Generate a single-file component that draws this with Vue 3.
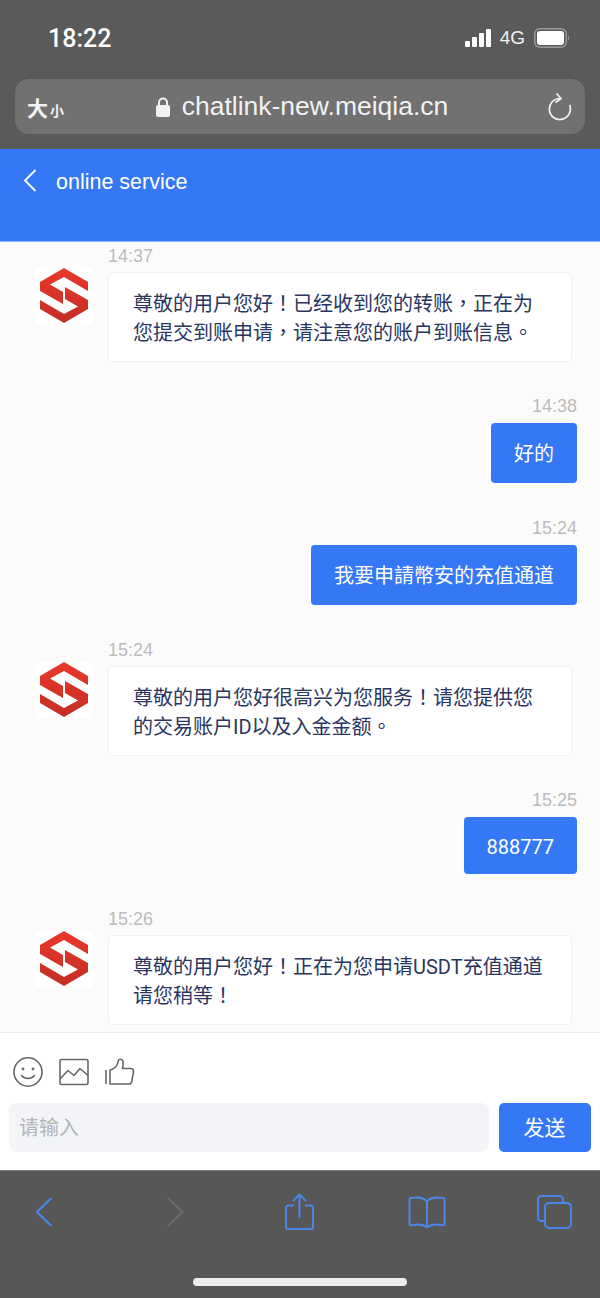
<template>
  <div class="phone">
    <header class="browser-top">
      <div class="status-bar">
        <span class="clock">18:22</span>
        <div class="status-right">
          <svg class="signal" width="27" height="18" viewBox="0 0 27 18" aria-hidden="true">
            <rect x="0" y="12" width="5" height="6" rx="1" />
            <rect x="7" y="8" width="5" height="10" rx="1" />
            <rect x="14" y="4" width="5" height="14" rx="1" />
            <rect x="21" y="0" width="5" height="18" rx="1" />
          </svg>
          <span class="network">4G</span>
          <svg class="battery" width="36" height="20" viewBox="0 0 36 20" aria-hidden="true">
            <rect x="0.75" y="0.75" width="31.5" height="18.5" rx="5" fill="none" stroke="#999" stroke-width="1.5" />
            <rect x="3" y="3" width="27" height="14" rx="3" fill="#fff" />
            <path d="M34 7 Q36 10 34 13 Z" fill="#999" />
          </svg>
        </div>
      </div>
      <div class="url-bar">
        <span class="text-size">大<small>小</small></span>
        <div class="url">
          <svg width="14" height="20" viewBox="0 0 14 20" aria-hidden="true">
            <path d="M3 9V5.500a4 4 0 0 1 8 0V9" fill="none" stroke="#f2f2f2" stroke-width="2" />
            <rect x="0" y="8" width="14" height="12" rx="2" fill="#f2f2f2" />
          </svg>
          <span>chatlink-new.meiqia.cn</span>
        </div>
        <svg class="reload" width="26" height="30" viewBox="0 0 26 30" fill="none" stroke="#f2f2f2" stroke-width="1.700" aria-hidden="true">
          <path d="M14 6.500a10.500 10.500 0 1 0 9.600 6.500" />
          <path d="M10.500 1.500 15 6.500l-5.500 4" />
        </svg>
      </div>
    </header>

    <div class="page-head">
      <svg width="14" height="23" viewBox="0 0 14 23" fill="none" stroke="#fff" stroke-width="1.800" aria-hidden="true">
        <path d="M12.500 1 2 11.500 12.500 22" />
      </svg>
      <span>online service</span>
    </div>

    <main class="chat">
      <div
        v-for="msg in messages"
        :key="msg.time + msg.from"
        class="msg"
        :class="msg.from === 'me' ? 'msg-me' : 'msg-agent'"
        :style="{ marginTop: msg.gap + 'px' }"
      >
        <div v-if="msg.from === 'agent'" class="avatar">
          <svg width="48" height="55" viewBox="0 0 48 55" aria-hidden="true">
            <defs>
              <linearGradient id="logoRed" gradientUnits="userSpaceOnUse" x1="0" y1="0" x2="0" y2="55">
                <stop offset="0" stop-color="#ea372b" />
                <stop offset="1" stop-color="#c42e25" />
              </linearGradient>
            </defs>
            <path fill="url(#logoRed)" d="M24 0 48 14V23L24 9 10 16.500 23 24V36L0 23V14Z" />
            <path fill="url(#logoRed)" d="M25 19 48 32V41L24 55 0 41V32L24 46 38 38.500 25 31Z" />
          </svg>
        </div>
        <div class="msg-body">
          <div class="msg-time">{{ msg.time }}</div>
          <div class="bubble" :style="{ height: msg.height + 'px' }">
            <p v-for="line in msg.lines" :key="line">
              <span
                v-for="(part, i) in splitPunct(line)"
                :key="i"
                :class="{ punct: part.punct }"
              >{{ part.text }}</span>
            </p>
          </div>
        </div>
      </div>
    </main>

    <footer class="composer">
      <div class="tools">
        <svg width="30" height="30" viewBox="0 0 30 30" fill="none" stroke="#666" stroke-width="1.600" aria-hidden="true">
          <ellipse cx="15" cy="15" rx="14" ry="14.200" />
          <circle cx="10" cy="12" r="1.400" fill="#666" stroke="none" />
          <circle cx="20" cy="12" r="1.400" fill="#666" stroke="none" />
          <path d="M8.500 18.500c3.500 4 9.500 4 13 0" stroke-linecap="round" />
        </svg>
        <svg width="30" height="28" viewBox="0 0 30 28" fill="none" stroke="#666" stroke-width="1.600" aria-hidden="true">
          <rect x="1" y="1.500" width="28" height="25" rx="1.500" />
          <path d="M1 21 9 12.500l6 5 6-7 8 7" stroke-linejoin="round" />
        </svg>
        <svg width="30" height="28" viewBox="0 0 30 28" fill="none" stroke="#666" stroke-width="1.600" aria-hidden="true">
          <path d="M1 12v14" />
          <path d="M5 12v14h19c1.500 0 2.500-1 2.800-2.500l1.700-10c.2-1.800-1-3-2.700-3h-8.300c.6-2.500.8-5 .5-7-.3-2-2.800-3-4.300-1.500-.5.5-.7 1.500-.8 2.500C12.500 7.500 9.500 11 5 12Z" stroke-linejoin="round" />
        </svg>
      </div>
      <div class="input-row">
        <div class="input">请输入</div>
        <button class="send" type="button">发送</button>
      </div>
    </footer>

    <nav class="browser-bottom">
      <div class="nav-icons">
        <svg width="40" height="36" viewBox="0 0 40 36" fill="none" stroke="#4a86e8" stroke-width="2.200" aria-hidden="true">
          <path d="M27.500 4 13 18l14.500 14" />
        </svg>
        <svg width="40" height="36" viewBox="0 0 40 36" fill="none" stroke="#6b6b6b" stroke-width="2.200" aria-hidden="true">
          <path d="M16 4 30.500 18 16 32" />
        </svg>
        <svg width="40" height="38" viewBox="0 0 40 38" fill="none" stroke="#4a86e8" stroke-width="2" aria-hidden="true">
          <path d="M15 12.500h-5.500a2.500 2.500 0 0 0-2.500 2.500v18.500a2.500 2.500 0 0 0 2.500 2.500h22a2.500 2.500 0 0 0 2.500-2.500V15a2.500 2.500 0 0 0-2.500-2.500H26" />
          <path d="M20.500 25V2M14 8 20.500 1.500 27 8" />
        </svg>
        <svg width="40" height="34" viewBox="0 0 40 34" fill="none" stroke="#4a86e8" stroke-width="2" aria-hidden="true">
          <path d="M20 6.500C17 3 11 2 4 3 3 3 2.500 3.800 2.500 4.800V29c0 1 .8 1.500 1.800 1.300 5.700-1.300 12.200-1 15.700 2 3.500-3 10-3.300 15.700-2 1 .2 1.800-.3 1.800-1.300V4.800c0-1-.5-1.800-1.500-1.800C29 2 23 3 20 6.500Z" />
          <path d="M20 6.500V32" />
        </svg>
        <svg width="40" height="36" viewBox="0 0 40 36" fill="none" stroke="#4a86e8" stroke-width="2" aria-hidden="true">
          <rect x="11" y="9" width="26" height="25" rx="4" />
          <path d="M11 27H7.500A3.500 3.500 0 0 1 4 23.500v-18A3.500 3.500 0 0 1 7.500 2h18A3.500 3.500 0 0 1 29 5.500V9" />
        </svg>
      </div>
      <div class="home-bar"></div>
    </nav>
  </div>
</template>

<script setup>
const messages = [
  {
    from: 'agent',
    time: '14:37',
    gap: 4,
    height: 90,
    lines: ['尊敬的用户您好！已经收到您的转账，正在为', '您提交到账申请，请注意您的账户到账信息。']
  },
  { from: 'me', time: '14:38', gap: 35, height: 60, lines: ['好的'] },
  { from: 'me', time: '15:24', gap: 36, height: 60, lines: ['我要申請幣安的充值通道'] },
  {
    from: 'agent',
    time: '15:24',
    gap: 35,
    height: 90,
    lines: ['尊敬的用户您好很高兴为您服务！请您提供您', '的交易账户ID以及入金金额。']
  },
  { from: 'me', time: '15:25', gap: 35, height: 57, lines: ['888777'] },
  {
    from: 'agent',
    time: '15:26',
    gap: 35,
    height: 90,
    lines: ['尊敬的用户您好！正在为您申请USDT充值通道', '请您稍等！']
  }
]

// full-width punctuation sits centred in the cell, so it gets its own font
const splitPunct = (line) =>
  line
    .split(/([！，。])/)
    .filter(Boolean)
    .map((text) => ({ text, punct: /^[！，。]$/.test(text) }))
</script>

<style>
html,
body {
  margin: 0;
  background: #575757;
}
</style>

<style scoped>
.phone {
  display: flex;
  flex-direction: column;
  width: 600px;
  height: 1298px;
  overflow: hidden;
  font-family: "Liberation Sans", "Noto Sans CJK SC", sans-serif;
}

.browser-top {
  flex: 0 0 149px;
  box-sizing: border-box;
  padding: 0 15px;
  background: #5a5a5a;
  color: #f2f2f2;
}

.status-bar {
  display: flex;
  align-items: center;
  justify-content: space-between;
  height: 79px;
  padding: 0 15px 3px 33px;
  box-sizing: border-box;
}

.clock {
  font-family: Roboto, sans-serif;
  font-size: 25px;
  font-weight: 500;
  color: #fff;
}

.status-right {
  display: flex;
  align-items: center;
}

.network {
  margin: 0 9px 0 8px;
  font-size: 19px;
}

.signal {
  fill: #fff;
}

.url-bar {
  display: flex;
  align-items: center;
  height: 55px;
  padding: 0 13px 0 12px;
  border-radius: 14px;
  background: #717171;
}

.text-size {
  flex: 0 0 37px;
  font-size: 21px;
  font-weight: 700;
  white-space: nowrap;
}

.text-size small {
  margin-left: 2px;
  font-size: 14px;
}

.url {
  flex: 1;
  display: flex;
  align-items: center;
  justify-content: center;
  gap: 12px;
  padding-right: 6px;
  font-size: 26.500px;
}

.reload {
  flex: 0 0 auto;
}

.page-head {
  flex: 0 0 93px;
  box-sizing: border-box;
  display: flex;
  align-items: flex-start;
  gap: 19px;
  padding: 20px 0 0 23px;
  background: #3478f6;
  border-bottom: 1px solid #8db4fa;
  color: #fff;
  font-size: 21.500px;
  line-height: 26px;
}

.chat {
  flex: 1;
  min-height: 0;
  overflow: hidden;
  padding-right: 23px;
  background: #fbfbfb;
  border-bottom: 1px solid #ececec;
}

.msg {
  display: flex;
}

.msg-agent {
  padding-left: 36px;
}

.msg-me {
  justify-content: flex-end;
}

.avatar {
  flex: 0 0 56px;
  display: flex;
  align-items: flex-start;
  justify-content: center;
  height: 56px;
  margin: 22px 16px 0 0;
  background: #fff;
}

.msg-body {
  min-width: 0;
}

.msg-agent .msg-body {
  width: 464px;
}

.msg-time {
  height: 20px;
  margin-bottom: 6px;
  color: #bbb;
  font-size: 18px;
  line-height: 20px;
}

.msg-me .msg-time {
  line-height: 18px;
  text-align: right;
}

.bubble {
  display: flex;
  flex-direction: column;
  justify-content: center;
  box-sizing: border-box;
  padding: 1px 24px 0;
  border: 1px solid #f0f0f0;
  border-radius: 4px;
  background: #fff;
  color: #2a3560;
  font-family: Roboto, "Noto Sans CJK SC", sans-serif;
  font-size: 20px;
  line-height: 28px;
}

.bubble p {
  margin: 0;
  white-space: nowrap;
}

.punct {
  font-family: "Noto Sans CJK TC", sans-serif;
}

.msg-me .bubble {
  padding: 2px 23px 0;
  border: 0;
  background: #3478f6;
  color: #fff;
}

.composer {
  flex: 0 0 137px;
  box-sizing: border-box;
  padding: 24px 9px 0;
  background: #fff;
}

.tools {
  display: flex;
  align-items: center;
  gap: 16px;
  height: 30px;
  padding-left: 4px;
}

.input-row {
  display: flex;
  gap: 10px;
  margin-top: 16px;
}

.input {
  flex: 1;
  height: 49px;
  padding-left: 10px;
  border-radius: 8px;
  background: #f2f4f8;
  color: #b5b5b5;
  font-size: 20px;
  line-height: 51px;
}

.send {
  flex: 0 0 92px;
  height: 49px;
  padding: 0 1px 4px 0;
  border: 0;
  border-radius: 5px;
  background: #3478f6;
  color: #fff;
  font-family: inherit;
  font-size: 21px;
}

.browser-bottom {
  flex: 0 0 128px;
  box-sizing: border-box;
  border-top: 1px solid #7a7a7a;
  background: #575757;
}

.nav-icons {
  display: flex;
  align-items: center;
  justify-content: space-between;
  height: 82px;
  padding: 0 26px 0 24px;
}

.home-bar {
  width: 214px;
  height: 8px;
  margin: 25px auto 0;
  border-radius: 4px;
  background: #eee;
}
</style>
